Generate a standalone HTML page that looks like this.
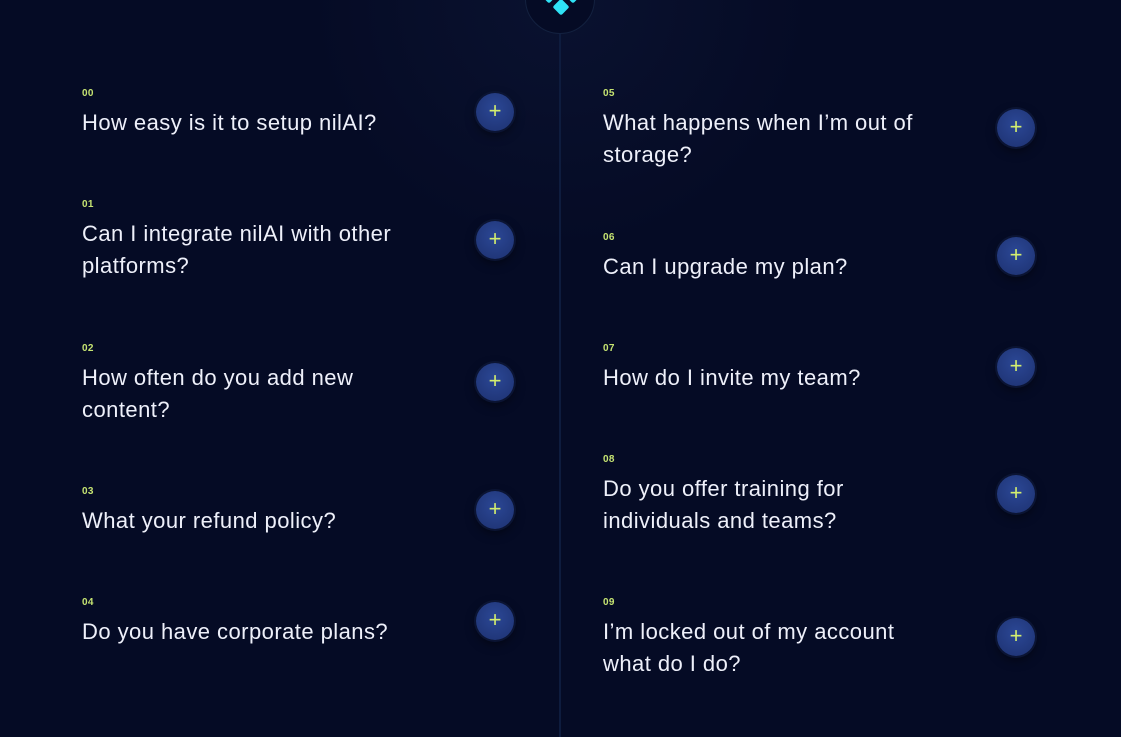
<!DOCTYPE html><html><head><style>
body{margin:0;width:1121px;height:737px;background:#050b25;overflow:hidden;position:relative;font-family:"Liberation Sans",sans-serif}
.n{position:absolute;font-size:10px;font-weight:bold;color:#c6e472;letter-spacing:.3px}
.t{position:absolute;font-size:22px;line-height:32px;color:#eef0fa;width:380px;letter-spacing:.45px;white-space:nowrap}
.b{position:absolute;width:38px;height:38px;border-radius:50%;background:radial-gradient(circle at 50% 40%,#2b4795,#1d3170);box-shadow:0 0 0 2px #0b1433,0 4px 10px rgba(0,0,0,.5);color:#d4ee6e;font-size:22px;line-height:36px;text-align:center}
.d{position:absolute;width:12px;height:12px;background:#2fe3f6;border-radius:2px;transform:rotate(45deg)}
</style></head><body>
<div style="position:absolute;left:310px;top:-250px;width:500px;height:500px;border-radius:50%;background:radial-gradient(circle,rgba(30,45,90,.2),rgba(5,11,37,0) 70%)"></div>
<div style="position:absolute;left:559px;top:34px;width:2px;height:703px;background:#0e1c3e"></div>
<div style="position:absolute;left:525px;top:-36px;width:68px;height:68px;border-radius:50%;border:1px solid #13213f;background:#050b25"></div>
<div class="d" style="left:555px;top:1px"></div><div class="d" style="left:543px;top:-11px"></div><div class="d" style="left:567px;top:-11px"></div>

<div class="n" style="left:82px;top:88px">00</div><div class="t" style="left:82px;top:107px">How easy is it to setup nilAI?</div><div class="b" style="left:476px;top:93px">+</div>
<div class="n" style="left:82px;top:199px">01</div><div class="t" style="left:82px;top:218px">Can I integrate nilAI with other<br>platforms?</div><div class="b" style="left:476px;top:221px">+</div>
<div class="n" style="left:82px;top:343px">02</div><div class="t" style="left:82px;top:362px">How often do you add new<br>content?</div><div class="b" style="left:476px;top:363px">+</div>
<div class="n" style="left:82px;top:486px">03</div><div class="t" style="left:82px;top:505px">What your refund policy?</div><div class="b" style="left:476px;top:491px">+</div>
<div class="n" style="left:82px;top:597px">04</div><div class="t" style="left:82px;top:616px">Do you have corporate plans?</div><div class="b" style="left:476px;top:602px">+</div>

<div class="n" style="left:603px;top:88px">05</div><div class="t" style="left:603px;top:107px">What happens when I’m out of<br>storage?</div><div class="b" style="left:997px;top:109px">+</div>
<div class="n" style="left:603px;top:232px">06</div><div class="t" style="left:603px;top:251px">Can I upgrade my plan?</div><div class="b" style="left:997px;top:237px">+</div>
<div class="n" style="left:603px;top:343px">07</div><div class="t" style="left:603px;top:362px">How do I invite my team?</div><div class="b" style="left:997px;top:348px">+</div>
<div class="n" style="left:603px;top:454px">08</div><div class="t" style="left:603px;top:473px">Do you offer training for<br>individuals and teams?</div><div class="b" style="left:997px;top:475px">+</div>
<div class="n" style="left:603px;top:597px">09</div><div class="t" style="left:603px;top:616px">I’m locked out of my account<br>what do I do?</div><div class="b" style="left:997px;top:618px">+</div>
</body></html>
